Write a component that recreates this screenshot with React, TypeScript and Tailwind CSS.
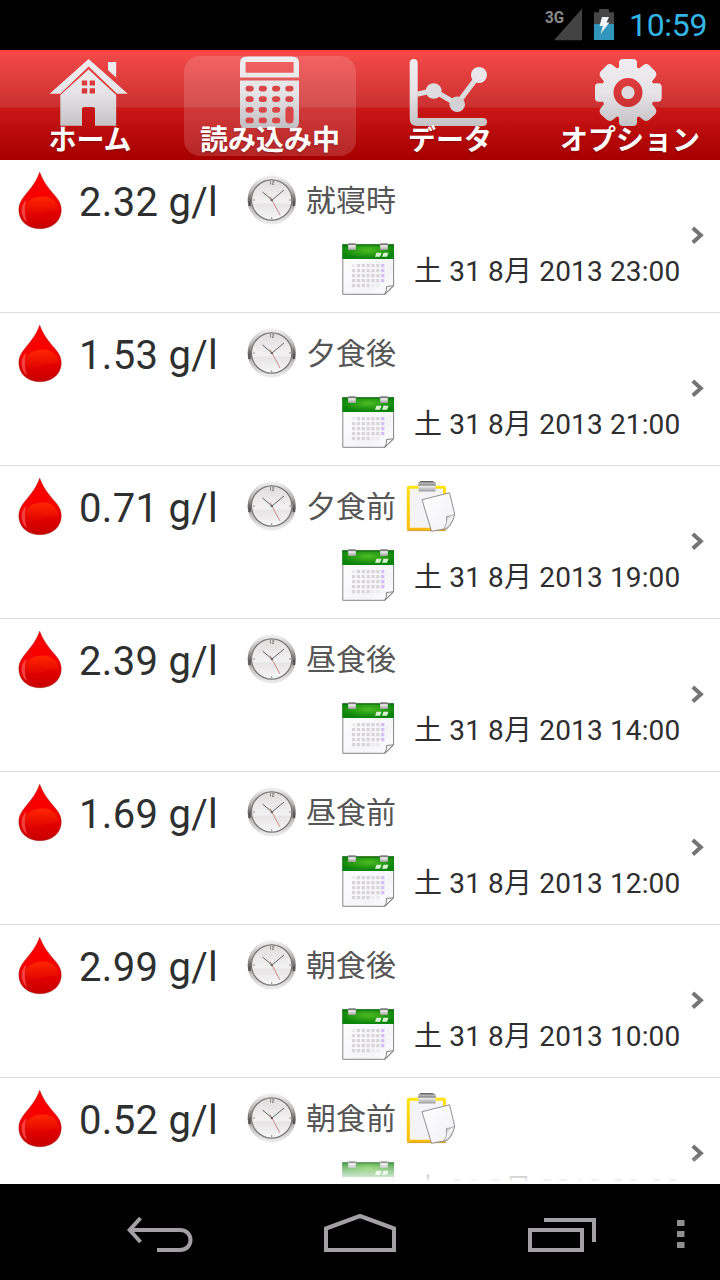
import type { ReactNode } from "react";

type Reading = { value: string; moment: string; date: string; note?: boolean };

const readings: Reading[] = [
  { value: "2.32", moment: "就寝時", date: "土 31 8月 2013 23:00" },
  { value: "1.53", moment: "夕食後", date: "土 31 8月 2013 21:00" },
  { value: "0.71", moment: "夕食前", date: "土 31 8月 2013 19:00", note: true },
  { value: "2.39", moment: "昼食後", date: "土 31 8月 2013 14:00" },
  { value: "1.69", moment: "昼食前", date: "土 31 8月 2013 12:00" },
  { value: "2.99", moment: "朝食後", date: "土 31 8月 2013 10:00" },
  { value: "0.52", moment: "朝食前", date: "土 31 8月 2013 08:00", note: true },
];

function Defs() {
  return (
    <svg width="0" height="0" className="absolute">
      <defs>
        <linearGradient id="silver" gradientUnits="userSpaceOnUse" x1="0" y1="57" x2="0" y2="128">
          <stop offset="0" stopColor="#f0eef0" />
          <stop offset="0.5" stopColor="#e6e4e6" />
          <stop offset="1" stopColor="#c2c0c2" />
        </linearGradient>
        <linearGradient id="drop" x1="0" y1="0" x2="0" y2="1">
          <stop offset="0" stopColor="#ff0000" />
          <stop offset="0.5" stopColor="#f50000" />
          <stop offset="1" stopColor="#c80000" />
        </linearGradient>
        <linearGradient id="dropShine" x1="0" y1="0" x2="0" y2="1">
          <stop offset="0" stopColor="#ff2600" />
          <stop offset="1" stopColor="#dc0000" />
        </linearGradient>
        <linearGradient id="rim" x1="0" y1="0" x2="0" y2="1">
          <stop offset="0" stopColor="#ececec" />
          <stop offset="0.3" stopColor="#b9b6b6" />
          <stop offset="0.5" stopColor="#6c6969" />
          <stop offset="0.7" stopColor="#c4c1c1" />
          <stop offset="1" stopColor="#e9e9e9" />
        </linearGradient>
        <linearGradient id="face" x1="0" y1="0" x2="0" y2="1">
          <stop offset="0" stopColor="#dddada" />
          <stop offset="0.55" stopColor="#f3f2f2" />
          <stop offset="0.6" stopColor="#e6e4e4" />
          <stop offset="1" stopColor="#fbfbfb" />
        </linearGradient>
        <radialGradient id="green" cx="0.5" cy="0.4" r="0.55">
          <stop offset="0" stopColor="#4dbb22" />
          <stop offset="1" stopColor="#0b840b" />
        </radialGradient>
        <linearGradient id="clip" x1="0" y1="0" x2="0" y2="1">
          <stop offset="0" stopColor="#8a8a8a" />
          <stop offset="0.4" stopColor="#f2f2f2" />
          <stop offset="1" stopColor="#9a9a9a" />
        </linearGradient>
        <linearGradient id="board" x1="0" y1="0" x2="0" y2="1">
          <stop offset="0" stopColor="#ffe310" />
          <stop offset="1" stopColor="#fdbb08" />
        </linearGradient>
        <linearGradient id="paper" x1="0" y1="0" x2="1" y2="1">
          <stop offset="0" stopColor="#ffffff" />
          <stop offset="0.7" stopColor="#f5f4f7" />
          <stop offset="1" stopColor="#ffffff" />
        </linearGradient>
        <linearGradient id="curl" x1="0" y1="0" x2="1" y2="1">
          <stop offset="0" stopColor="#777" />
          <stop offset="0.45" stopColor="#f5f5f5" />
          <stop offset="1" stopColor="#ccc" />
        </linearGradient>
      </defs>
    </svg>
  );
}

function HomeGlyph() {
  return (
    <svg width="180" height="78" viewBox="0 50 180 78" className="block">
      <g fill="url(#silver)">
        <path d="M88.6 59 L127.8 93.8 H117 L88.6 66.6 L60.4 93.8 H49.6 Z" />
        <path d="M108 62 H116.2 V77.5 L108 70.2 Z" />
        <path fillRule="evenodd" d="M88.6 69.5 L116.2 95 V125.8 H95 V109 Q95 107 93 107 H84 Q82 107 82 109 V125.8 H60.3 V95 Z M81.8 80.6 V85.6 H87.2 V80.6 Z M89.7 80.6 V85.6 H95 V80.6 Z M81.8 88.3 V93.5 H87.2 V88.3 Z M89.7 88.3 V93.5 H95 V88.3 Z" />
      </g>
    </svg>
  );
}

const keyColumns = [249.6, 262.8, 276.1, 289.4];
const keyRows = [88.6, 99.1, 109.8, 120.4];

function CalculatorGlyph() {
  return (
    <svg width="180" height="78" viewBox="180 50 180 78" className="block">
      <path fill="url(#silver)" fillRule="evenodd" d="M240 77.6 V63 Q240 56.6 247 56.6 H292 Q299 56.6 299 63 V77.6 Z M245.6 62 V72.8 H293.6 V62 Z" />
      <path fill="url(#silver)" d="M240 80.4 H299 V122 Q299 128.5 292 128.5 H247 Q240 128.5 240 122 Z" />
      <g fill="#d94647">
        {keyRows.map((y, r) =>
          keyColumns.map((x, c) => (c === 3 && r > 1 ? null : <rect key={`${r}-${c}`} x={x - 4.1} y={y - 2.9} width="8.2" height="5.8" rx="3" />)),
        )}
        <rect x="285.4" y="106.6" width="8.2" height="17" rx="4" />
      </g>
    </svg>
  );
}

function ChartGlyph() {
  return (
    <svg width="180" height="78" viewBox="360 50 180 78" className="block">
      <path fill="url(#silver)" d="M409.7 63 a4 4 0 0 1 8 0 V118 H483 a4 4 0 0 1 0 8 H417 Q409.7 126 409.7 118 Z" />
      <path fill="none" stroke="#dedcde" strokeWidth="5.2" d="M417 94.3 L433.5 90.5 L457 104 L479 75" />
      <g fill="#dedcde">
        <ellipse cx="433.7" cy="91" rx="8" ry="7.8" />
        <circle cx="457.2" cy="104.3" r="7.8" fill="#d3d1d3" />
        <circle cx="479" cy="75" r="8" fill="#eae8ea" />
      </g>
    </svg>
  );
}

function GearGlyph() {
  return (
    <svg width="180" height="78" viewBox="540 50 180 78" className="block">
      <path
        fill="url(#silver)"
        fillRule="evenodd"
        d="M619 63 Q619 59 623 59 H633 Q637 59 637 63 V67.5 L639 68.5 L643.5 65 Q646.5 63 649.500 65.500 L655 71 Q657.500 74 655.500 77 L652 81.500 L653 83.300 H658 Q661.700 83.300 661.700 87 V98 Q661.700 101.700 658 101.700 H653 L652 104 L655.500 108.500 Q657.500 111.500 655 114.500 L649.500 119.500 Q646.500 122 643.500 120 L639 116.500 L637 117.500 V122 Q637 126 633 126 H623 Q619 126 619 122 V117.500 L617 116.500 L612.500 120 Q609.500 122 606.500 119.500 L601 114.500 Q598.500 111.500 600.500 108.500 L604 104 L603 101.700 H598.500 Q595 101.700 595 98 V87 Q595 83.300 598.500 83.300 H603 L604 81.500 L600.500 77 Q598.500 74 601 71 L606.500 65.500 Q609.500 63 612.500 65 L617 68.500 L619 67.500 Z M628 78 A14.500 14.500 0 1 0 628 107 A14.500 14.500 0 1 0 628 78 Z"
      />
      <circle cx="628" cy="92.5" r="6.6" fill="#dddbdd" />
    </svg>
  );
}

function Tab({ label, active, children }: { label: string; active?: boolean; children: ReactNode }) {
  return (
    <div className="relative h-[110px] w-[180px]">
      {active && <div className="absolute inset-x-1 top-1.5 bottom-1 rounded-2xl bg-white/15" />}
      <div className="relative">{children}</div>
      <div className="relative -mt-[9px] text-center font-['Noto_Sans_CJK_JP',sans-serif] text-[28px] leading-[38px] font-bold whitespace-nowrap text-white [text-shadow:0_1px_2px_rgba(0,0,0,.25)]">
        {label}
      </div>
    </div>
  );
}

function StatusBar() {
  return (
    <div className="flex h-[50px] shrink-0 justify-end bg-black pr-[12px] text-[#33b5e5]">
      <svg width="80" height="50" viewBox="539 0 80 50">
        <text x="545" y="22.500" textLength="19" lengthAdjust="spacingAndGlyphs" fill="#8a8a8a" className="font-['Roboto',sans-serif] text-[17px] font-bold">
          3G
        </text>
        <path d="M582 8.700 V40.300 H554 Z" fill="#434343" />
        <path d="M594 12.300 H599 V9 H609 V12.300 H614 V24 H594 Z" fill="#464646" />
        <path d="M594 24 H614 V40 H594 Z" fill="#3296bc" />
        <path d="M602 17 H609 L606.500 22.500 H609.500 L600.500 34 L603 26 H599.500 Z" fill="#f0f4f6" />
      </svg>
      <div className="ml-[10px] w-[79px] text-[32px] leading-[50px] tracking-[-0.3px] whitespace-nowrap">10:59</div>
    </div>
  );
}

function Drop() {
  return (
    <svg width="46" height="60" viewBox="17 171 46 60" className="block shrink-0">
      <path d="M39.700 172 C43 181 48 187.500 53.500 194 C58.500 199.500 61.300 203.500 61.300 210 C61.300 221.500 51.500 228.800 40 228.800 C28.500 228.800 18.800 221.500 18.800 210 C18.800 203.500 21.500 199.500 26 194 C31.500 187.500 36.500 181 39.700 172 Z" fill="url(#drop)" stroke="#7a3a3a" strokeOpacity=".4" strokeWidth=".8" />
      <path d="M25 207 C27 199 36 196 45 196.500 C52 197 58 202 59 210 C53 211 34 214 26 217 Z" fill="url(#dropShine)" />
      <path d="M26.500 199.500 Q20 205 22 214 Q23.500 220 27 222 Q23 212 26.500 199.500 Z" fill="#ff6a6a" opacity=".6" />
    </svg>
  );
}

function Clock() {
  return (
    <svg width="50" height="52" viewBox="247 175 50 52" className="block shrink-0">
      <circle cx="271.700" cy="200" r="24.500" fill="#ededed" />
      <circle cx="271.700" cy="200" r="22.300" fill="url(#face)" stroke="url(#rim)" strokeWidth="3.400" />
      <circle cx="271.700" cy="200" r="20.200" fill="none" stroke="#777474" strokeWidth="1.200" />
      <path d="M249.500 201 v5 M294 201 v5" stroke="#555" strokeWidth="2.400" />
      <path d="M272 200 L262.500 192 M272 200 L284 190" stroke="#666" strokeWidth="1" />
      <path d="M270 196.500 L280 215" stroke="#c98b8b" strokeWidth="1" />
      <circle cx="271.800" cy="200" r="1.300" fill="#666" />
      <path d="M270.500 181 v3.500 M272.300 181.400 h1.500 v1.500 h-1.500 v1.600 h1.800 M271.700 217 v2.200 M253 200 h2 M289 200 h2" fill="none" stroke="#777" strokeWidth=".8" />
    </svg>
  );
}

const dayCols = [0, 1, 2, 3, 4, 5, 6];
const dayRows = [0, 1, 2, 3, 4];

function CalendarIcon() {
  return (
    <svg width="54" height="54" viewBox="341 243 54 54" className="block shrink-0">
      <path d="M342.800 246 H393.600 V287 L385 295.300 H342.800 Z" fill="url(#paper)" stroke="#858585" strokeWidth="1" />
      <path d="M342.300 245.500 H394 V260 H342.300 Z" fill="url(#green)" />
      <path d="M342.300 245.900 H394" stroke="#0b5d0b" strokeWidth=".9" />
      {[348.2, 380.2].map((x) => (
        <g key={x}>
          <rect x={x} y="244" width="7.600" height="7" fill="url(#clip)" />
          <path d={`M${x - 1} 245.600 h9.500`} stroke="#777" strokeWidth="1" />
        </g>
      ))}
      <path d="M376.500 253.800 h5 l-1.500 4 h-5 Z M383.500 253.800 h5 l-1.500 4 h-5 Z" fill="#d9f3d2" />
      {dayRows.map((r) =>
        dayCols.map((c) =>
          r === 4 && c === 6 ? null : (
            <rect
              key={`${r}-${c}`}
              x={352 + c * 4.85}
              y={265 + r * 5}
              width="3.200"
              height="3.200"
              fill={c === 6 ? "#d5bdf8" : (r === 0 && c === 0) || (r === 4 && c > 3) ? "#ececec" : "#d7d5d8"}
            />
          ),
        ),
      )}
      <path d="M393.300 286.800 L386.500 287.500 Q387 292 384.500 295.500 Z" fill="#f5f5f5" stroke="#777" strokeWidth=".9" />
    </svg>
  );
}

function NoteIcon() {
  return (
    <svg width="50" height="54" viewBox="406 479 50 54" className="block shrink-0">
      <rect x="408.300" y="486.300" width="36.200" height="42" rx="1" fill="#f4f4f6" stroke="url(#board)" strokeWidth="3" />
      <path d="M407 529.600 H446" stroke="#c58c1c" strokeWidth=".7" />
      <rect x="418.500" y="481" width="17" height="9.500" fill="url(#clip)" />
      <path d="M420 480.500 h13.500 M418 484 h18" stroke="#666" strokeWidth="1" />
      <path d="M422 498.700 L449.500 491.800 L454.700 513 Q452 524 447 527.500 L431.500 530.300 Z" fill="url(#paper)" stroke="#858585" strokeWidth=".9" />
      <path d="M454.700 513 Q451 515.500 446.500 515.500 Q448 522 443.500 528.500 Q452 525.500 454.700 513 Z" fill="url(#curl)" stroke="#888" strokeWidth=".7" />
    </svg>
  );
}

function ReadingRow({ item }: { item: Reading }) {
  return (
    <div className="flex h-[153px] shrink-0 items-center border-b border-[#dcdcdc] bg-white">
      <div className="flex h-full w-[682px] flex-col">
        <div className="flex h-[82px] items-center pl-[17px]">
          <Drop />
          <div className="ml-[16px] w-[153px] pt-[4px] text-[40px] leading-[48px] tracking-[0.3px] whitespace-nowrap text-[#2e3030]">{item.value} g/l</div>
          <div className="ml-[15px] flex items-center">
            <Clock />
            <div className="ml-[9px] w-[90px] text-[30px] leading-[44px] whitespace-nowrap text-[#555]">{item.moment}</div>
            {item.note && (
              <div className="ml-[10px]">
                <NoteIcon />
              </div>
            )}
          </div>
        </div>
        <div className="flex h-[54px] items-center justify-end">
          <CalendarIcon />
          <div className="ml-[19px] w-[268px] pt-[5px] text-[28px] leading-[40px] tracking-[0.15px] whitespace-nowrap text-[#2e2e2e]">{item.date}</div>
        </div>
      </div>
      <svg width="16" height="22" viewBox="690 225 16 22" className="ml-[8px] block">
        <path d="M692.800 228 L700.800 235.300 L692.800 242.600" fill="none" stroke="#747474" strokeWidth="4" />
      </svg>
    </div>
  );
}

function NavBar() {
  return (
    <div className="flex h-24 shrink-0 bg-black pl-[110px]">
      <svg width="100" height="96" viewBox="110 1184 100 96" fill="none" stroke="#a3a1a3" strokeWidth="4">
        <path d="M129 1230 H180 C194 1230 194 1250 180 1250 H157" />
        <path d="M140.500 1218 L129.700 1230 L140.500 1242" />
      </svg>
      <svg width="100" height="96" viewBox="310 1184 100 96" className="ml-[100px]" fill="none" stroke="#a3a1a3" strokeWidth="4">
        <path d="M326 1250 V1228.500 L360 1216 L394 1228.500 V1250 Z" />
      </svg>
      <svg width="100" height="96" viewBox="510 1184 100 96" className="ml-[100px]" fill="none" stroke="#a3a1a3" strokeWidth="4">
        <path d="M530 1230 H582 V1250 H530 Z M544 1220 H594 V1242" />
      </svg>
      <svg width="40" height="96" viewBox="660 1184 40 96" className="ml-[50px]" fill="#8f8f8f">
        <path d="M677 1220 h7.500 v6 h-7.500 Z M677 1231 h7.500 v6 h-7.500 Z M677 1242 h7.500 v6 h-7.500 Z" />
      </svg>
    </div>
  );
}

export default function App() {
  return (
    <div className="flex h-[1280px] w-[720px] flex-col overflow-hidden bg-white font-['Roboto','Noto_Sans_CJK_JP',sans-serif]">
      <Defs />
      <StatusBar />
      <div className="flex h-[110px] shrink-0 bg-[linear-gradient(to_bottom,#ff4040_0,#ff4040_2px,#f34949_3px,#cb3030_57px,#ca1717_58px,#a80000_108px)]">
        <Tab label="ホーム">
          <HomeGlyph />
        </Tab>
        <Tab label="読み込み中" active>
          <CalculatorGlyph />
        </Tab>
        <Tab label="データ">
          <ChartGlyph />
        </Tab>
        <Tab label="オプション">
          <GearGlyph />
        </Tab>
      </div>
      <div className="relative flex h-[1024px] shrink-0 flex-col overflow-hidden">
        {readings.map((item) => (
          <ReadingRow key={item.date} item={item} />
        ))}
        <div className="absolute inset-x-0 bottom-0 h-7 bg-[linear-gradient(to_bottom,rgba(255,255,255,0),#fff_26px)]" />
      </div>
      <NavBar />
    </div>
  );
}
